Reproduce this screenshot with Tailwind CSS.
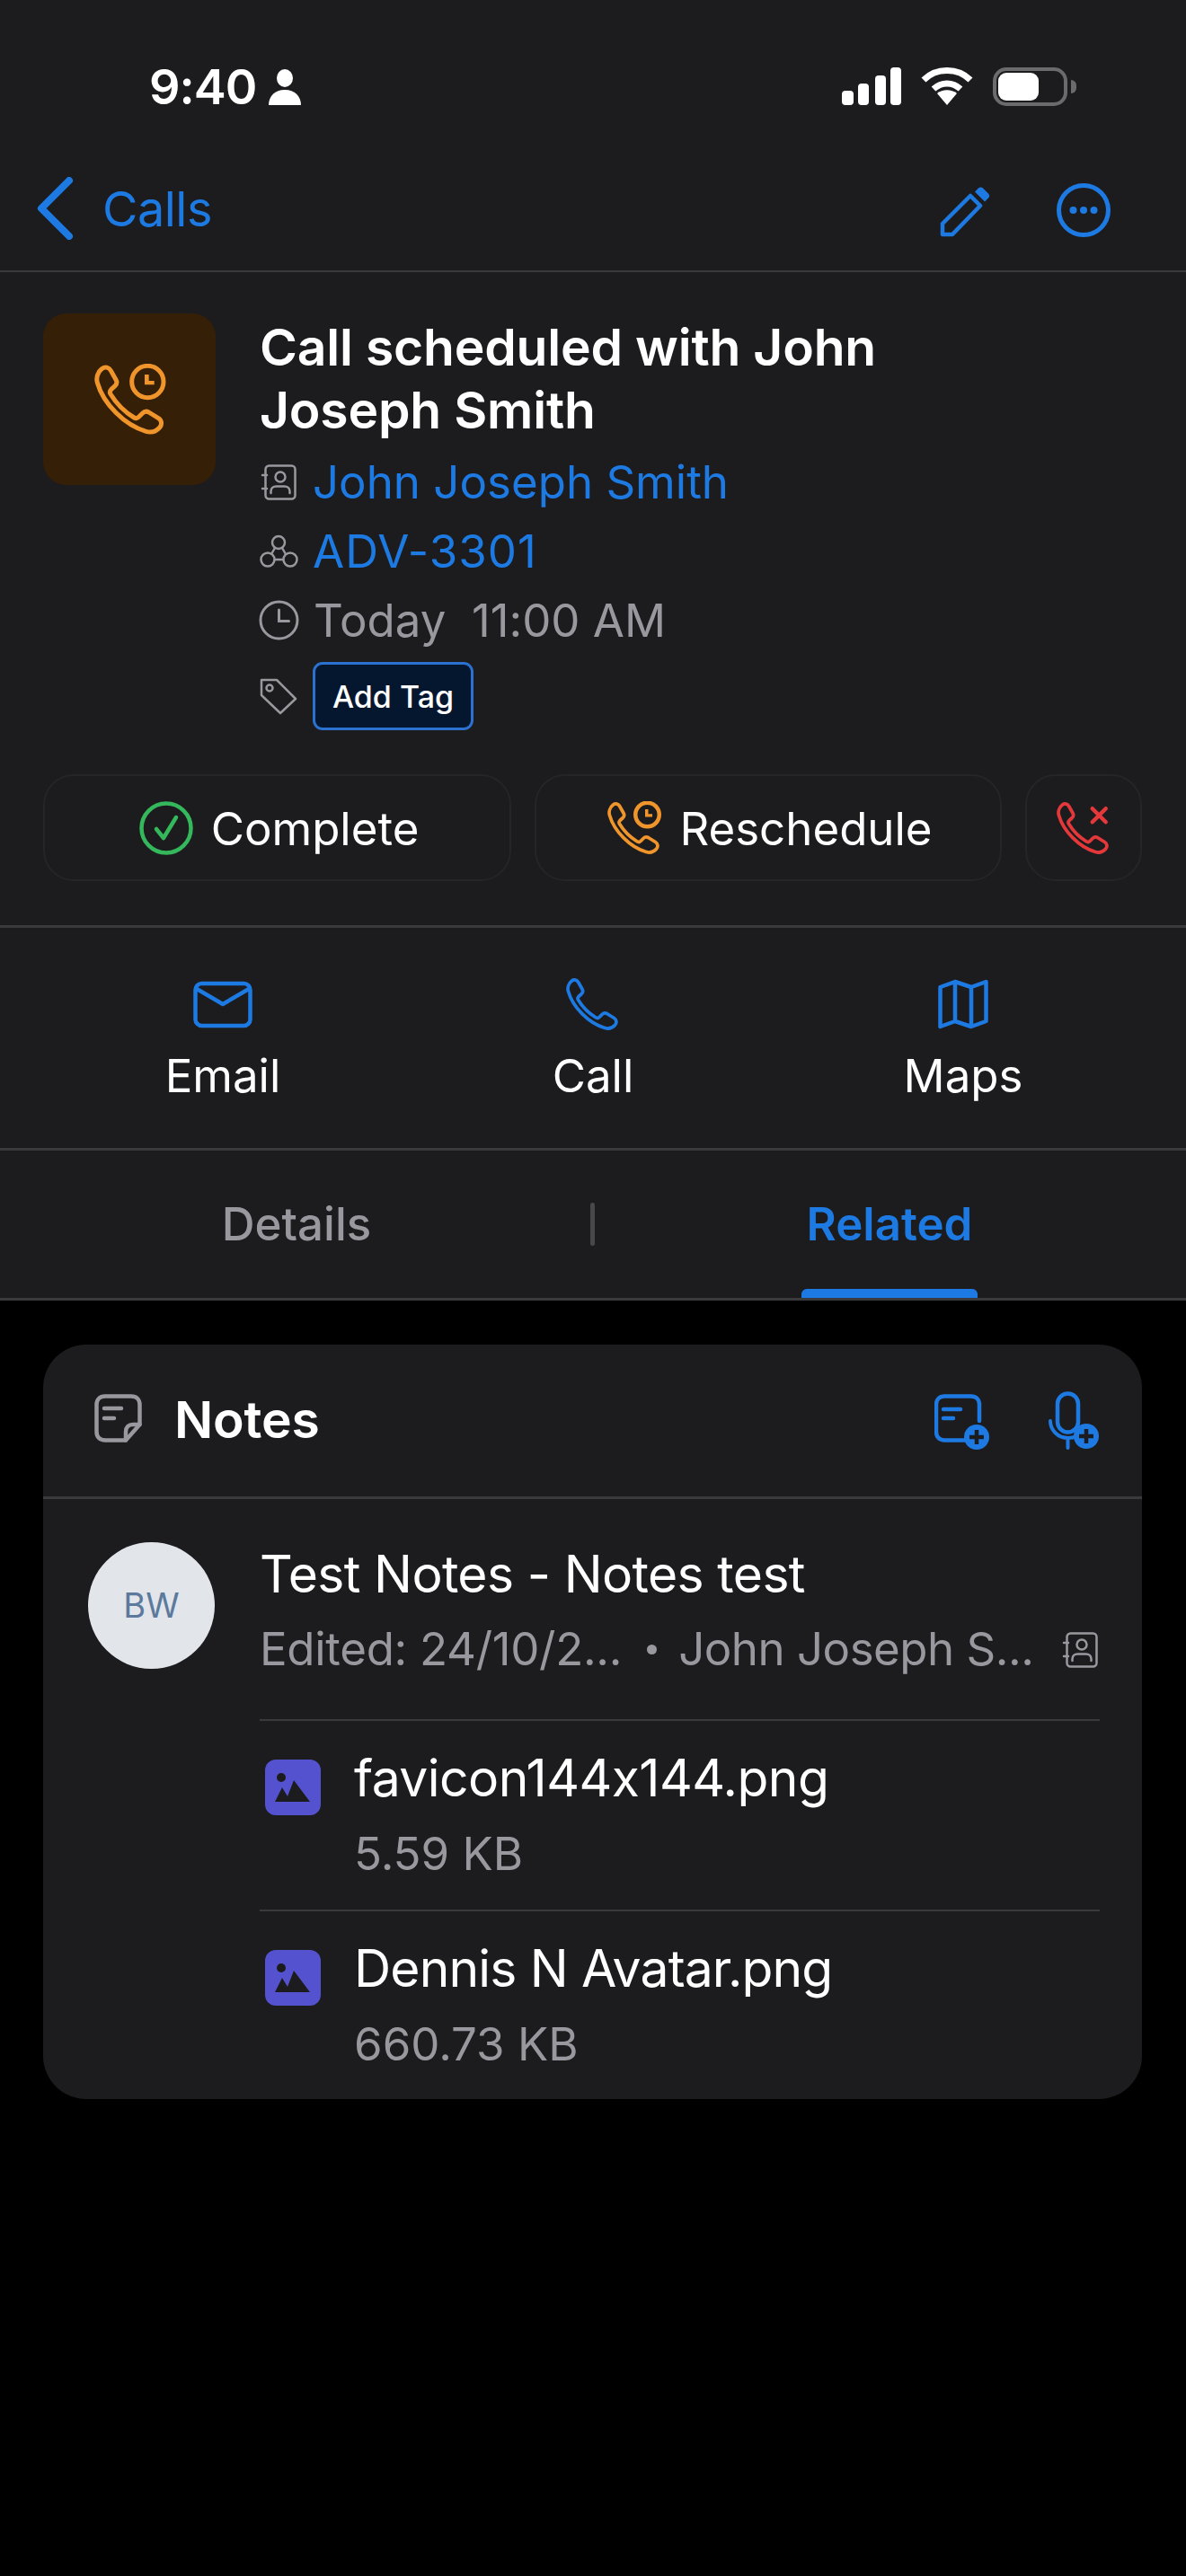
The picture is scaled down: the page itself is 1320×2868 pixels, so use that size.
<!DOCTYPE html>
<html lang="en">
<head>
    <meta charset="UTF-8">
    <meta name="viewport" content="width=device-width, initial-scale=1.0">
    <title>Call details</title>
    <script src="https://cdn.jsdelivr.net/npm/@tailwindcss/browser@4"></script>
</head>
<body class="bg-black min-h-screen font-['Inter',sans-serif] [font-feature-settings:'calt'_0] text-white">
    <!-- shared icons -->
    <svg class="hidden">
        <symbol id="phone" viewBox="0 0 24 24">
            <path fill="none" stroke="currentColor" stroke-width="1.5" stroke-linejoin="round" d="M2.6 1.6c1-.8 2.3-.4 2.9.7l1.7 3c.4.7.3 1.5-.3 2.1L5.6 8.600c-.4.4-.5 1-.2 1.500 1.900 3.100 4.800 6 7.900 7.900.5.3 1.100.2 1.500-.2l1.300-1.300c.6-.6 1.400-.7 2.100-.3l3.200 2c1.100.7 1.300 2.100.4 3.100-1.100 1.200-2.800 1.800-4.500 1.300C10.200 20.600 3 13.400 1 6.300.5 4.600 1.200 2.700 2.600 1.600z"/>
        </symbol>
        <symbol id="contact" viewBox="0 0 40 40">
            <g fill="none" stroke="currentColor" stroke-width="2.500" stroke-linecap="round" stroke-linejoin="round">
                <rect x="5" y="1.500" width="33" height="37" rx="4"/>
                <path d="M1.500 12h5M1.500 27h5"/>
                <circle cx="21.500" cy="14" r="5.500"/>
                <path d="M11 32v-2c0-3.500 2.500-5.500 6-5.500h9c3.500 0 6 2 6 5.500v2"/>
            </g>
        </symbol>
        <symbol id="image" viewBox="0 0 62 62">
            <rect width="62" height="62" rx="12" fill="#5552d0"/>
            <circle cx="18" cy="20" r="5" fill="#1c1c1e"/>
            <path fill="#1c1c1e" d="M11 47l8-16 6 10 7-18 18 24z"/>
        </symbol>
    </svg>

    <div class="bg-[#1c1c1e]">
        <!-- status bar -->
        <div class="h-[190px] pt-[75px] pl-[166px] pr-[122px] flex justify-between items-start">
            <div class="flex items-center gap-[14px] h-[43px]">
                <span class="text-[54px] font-semibold leading-[43px] tracking-[-1px]">9:40</span>
                <svg class="w-[36px] h-[40px]" viewBox="0 0 36 40" fill="#fff"><ellipse cx="18" cy="10" rx="9" ry="10"/><path d="M0 40c0-10 7-17 18-17s18 7 18 17z"/></svg>
            </div>
            <div class="flex items-start gap-[22px]">
                <svg class="w-[66px] h-[42px]" viewBox="0 0 66 42" fill="#fff">
                    <rect x="0" y="26" width="13" height="16" rx="4"/><rect x="18" y="18" width="12" height="24" rx="4"/><rect x="37" y="9" width="12" height="33" rx="4"/><rect x="54" y="0" width="12" height="42" rx="4"/>
                </svg>
                <svg class="w-[58px] h-[42px]" viewBox="0 0 58 42" fill="none" stroke="#fff" stroke-width="7">
                    <path d="M3 14C17 0 41 0 55 14"/><path d="M14 24c9-8 21-8 30 0"/><path fill="#fff" stroke="none" d="M29 42L18 29c6-5 16-5 22 0z"/>
                </svg>
                <div class="flex items-center gap-[4px]">
                    <div class="w-[83px] h-[43px] rounded-[15px] border-[4px] border-[#6b6b6d] p-[2px]">
                        <div class="w-[45px] h-full rounded-[9px] bg-white"></div>
                    </div>
                    <div class="w-[6px] h-[15px] rounded-r-full bg-[#6b6b6d]"></div>
                </div>
            </div>
        </div>

        <!-- nav -->
        <div class="h-[113px] pl-[40px] pr-[84px] flex items-start justify-between border-b-[2px] border-[#3a3a3c] text-[#1e7ae3]">
            <div class="flex items-start gap-[32px]">
                <svg class="w-[42px] h-[70px] mt-[7px]" viewBox="0 0 42 70" fill="none" stroke="currentColor" stroke-width="8" stroke-linecap="round" stroke-linejoin="round"><path d="M37 4L6 35l31 31"/></svg>
                <span class="text-[54px] leading-[70px] mt-[8px] tracking-[-0.5px]">Calls</span>
            </div>
            <div class="flex items-start gap-[74px] pt-[14px]">
                <svg class="w-[56px] h-[56px] mt-[4px]" viewBox="0 0 56 56"><path fill="none" stroke="currentColor" stroke-width="4.500" stroke-linejoin="round" d="M3 53V41L34 10l11 11-31 32z"/><path fill="currentColor" d="M39 5.500l4-4c1.500-1.500 3.500-1.500 5 0l6 6c1.500 1.500 1.500 3.500 0 5l-4 4z"/></svg>
                <svg class="w-[60px] h-[60px]" viewBox="0 0 60 60"><circle cx="30" cy="30" r="27.500" fill="none" stroke="currentColor" stroke-width="5"/><circle cx="18.500" cy="30" r="4" fill="currentColor"/><circle cx="30" cy="30" r="4" fill="currentColor"/><circle cx="41.500" cy="30" r="4" fill="currentColor"/></svg>
            </div>
        </div>

        <!-- call summary -->
        <div class="pt-[46px] px-[48px] pb-[49px] border-b-[3px] border-[#3a3a3c]">
            <div class="flex gap-[49px]">
                <div class="w-[192px] h-[191px] shrink-0 rounded-[26px] bg-[#361f07] flex items-center justify-center text-[#f0952b]">
                    <svg class="w-[80px] h-[80px] ml-[2px]" viewBox="0 0 24 24">
                        <use href="#phone"/>
                        <circle cx="17.800" cy="6" r="5.300" fill="#361f07" stroke="currentColor" stroke-width="1.500"/>
                        <path fill="currentColor" d="M16.800 3.600h1.400v2.100h1.800V7h-3.200z"/>
                    </svg>
                </div>
                <div class="pt-[3px] min-w-0">
                    <h1 class="text-[57px] leading-[70px] font-semibold tracking-[-0.2px] w-[800px]">Call scheduled with John Joseph Smith</h1>
                    <div class="mt-[6px] flex items-center h-[77px] gap-[16px] text-[#98989e]">
                        <svg class="w-[43px] h-[40px] shrink-0"><use href="#contact"/></svg>
                        <span class="text-[51px] leading-[77px] text-[#1e7ae3]">John Joseph Smith</span>
                    </div>
                    <div class="flex items-center h-[77px] gap-[16px] text-[#98989e]">
                        <svg class="w-[43px] h-[38px] shrink-0" viewBox="0 0 43 38" fill="none" stroke="currentColor" stroke-width="2.500"><circle cx="21" cy="9" r="7"/><circle cx="9" cy="28" r="7.500"/><circle cx="34" cy="28" r="7.500"/><path d="M17 15l-4 7M25 15l4 7M16.500 28h10"/></svg>
                        <span class="text-[51px] leading-[77px] tracking-[1px] text-[#1e7ae3]">ADV-3301</span>
                    </div>
                    <div class="flex items-center h-[77px] gap-[16px] text-[#98989e]">
                        <svg class="w-[45px] h-[45px] -ml-[1px] shrink-0" viewBox="0 0 45 45" fill="none" stroke="currentColor" stroke-width="3" stroke-linecap="round"><circle cx="22.500" cy="22.500" r="20.500"/><path d="M22.500 11v12.500h11"/></svg>
                        <span class="text-[51px] leading-[77px] whitespace-pre">Today  11:00 AM</span>
                    </div>
                    <div class="mt-[8px] flex items-center gap-[16px] text-[#98989e]">
                        <svg class="w-[43px] h-[42px] shrink-0" viewBox="0 0 43 42" fill="none" stroke="currentColor" stroke-width="2.500" stroke-linejoin="round"><path d="M2 3h17l21 21-17 16L2 20z"/><circle cx="11" cy="12" r="3.500"/></svg>
                        <button class="w-[179px] h-[76px] rounded-[11px] border-[3px] border-[#2b72d0] bg-[#04172f] text-white text-[34px] font-medium">Add Tag</button>
                    </div>
                </div>
            </div>
            <div class="mt-[49px] flex gap-[26px] text-[51px]">
                <button class="w-[521px] h-[119px] pl-[4px] rounded-[34px] border-[2px] border-[#252527] flex items-center justify-center gap-[20px]">
                    <svg class="w-[60px] h-[60px]" viewBox="0 0 60 60" fill="none" stroke="#34b85b" stroke-width="4.500" stroke-linecap="round" stroke-linejoin="round"><circle cx="30" cy="30" r="27.500"/><path d="M19 31l8 10 14-23"/></svg>
                    <span class="pt-[3px]">Complete</span>
                </button>
                <button class="w-[520px] h-[119px] pl-[4px] rounded-[34px] border-[2px] border-[#252527] flex items-center justify-center gap-[20px]">
                    <svg class="w-[60px] h-[60px] text-[#f0952b]" viewBox="0 0 24 24">
                        <use href="#phone"/>
                        <circle cx="17.800" cy="6" r="5.300" fill="#1c1c1e" stroke="currentColor" stroke-width="1.800"/>
                        <path fill="currentColor" d="M16.800 3.600h1.400v2.100h1.800V7h-3.200z"/>
                    </svg>
                    <span class="pt-[3px]">Reschedule</span>
                </button>
                <button class="w-[130px] h-[119px] rounded-[34px] border-[2px] border-[#252527] flex items-center justify-center">
                    <svg class="w-[60px] h-[60px] text-[#e5383b]" viewBox="0 0 24 24">
                        <use href="#phone"/>
                        <path fill="none" stroke="currentColor" stroke-width="1.800" stroke-linecap="round" d="M15.900 3.300l6 6M21.900 3.300l-6 6"/>
                    </svg>
                </button>
            </div>
        </div>

        <!-- quick actions -->
        <div class="h-[248px] px-[42px] grid grid-cols-3 border-b-[3px] border-[#3a3a3c] text-[51px]">
            <div class="flex flex-col items-center pt-[55px]">
                <svg class="w-[66px] h-[60px] text-[#1e7ae3]" viewBox="0 0 66 60" fill="none" stroke="currentColor" stroke-width="4.500" stroke-linejoin="round"><rect x="2.500" y="7" width="61" height="47" rx="7"/><path d="M4 13l29 17 29-17"/></svg>
                <span class="mt-[20px] leading-[60px]">Email</span>
            </div>
            <div class="flex flex-col items-center pt-[55px]">
                <svg class="w-[60px] h-[60px] text-[#1e7ae3]" viewBox="0 0 24 24"><use href="#phone"/></svg>
                <span class="mt-[20px] leading-[60px]">Call</span>
            </div>
            <div class="flex flex-col items-center pt-[55px]">
                <svg class="w-[56px] h-[60px] text-[#1e7ae3]" viewBox="0 0 56 60" fill="none" stroke="currentColor" stroke-width="4.500" stroke-linejoin="round"><path d="M2.500 11L19 5l18 6 16.500-6v44L37 55l-18-6-16.500 6zM19 5v44M37 11v44"/></svg>
                <span class="mt-[20px] leading-[60px]">Maps</span>
            </div>
        </div>

        <!-- tabs -->
        <div class="h-[167px] grid grid-cols-2 border-b-[3px] border-[#3a3a3c] text-[51px] leading-[60px]">
            <div class="relative flex items-center justify-center text-[#98989e] font-medium">
                Details
                <span class="absolute right-[-2px] top-[58px] w-[5px] h-[48px] rounded bg-[#48484a]"></span>
            </div>
            <div class="relative flex items-center justify-center text-[#1e7ae3] font-semibold">
                Related
                <span class="absolute left-[232px] bottom-0 w-[196px] h-[10px] rounded-t-[6px] bg-[#1e7ae3]"></span>
            </div>
        </div>
    </div>

    <!-- notes card -->
    <div class="mt-[49px] ml-[48px] w-[1223px] h-[840px] rounded-[48px] bg-[#1c1c1e] overflow-hidden">
        <div class="h-[172px] border-b-[3px] border-[#3a3a3c] pl-[57px] pr-[48px] flex items-start justify-between">
            <div class="flex items-center gap-[36px] pt-[46px]">
                <svg class="w-[53px] h-[54px] mt-[-2px] text-[#98989e]" viewBox="0 0 53 54" fill="none" stroke="currentColor" stroke-width="4.500" stroke-linecap="round" stroke-linejoin="round"><path d="M35 51.500H12C6 51.500 2.500 48 2.500 42V12C2.500 6 6 2.500 12 2.500h29c6 0 9.500 3.500 9.500 9.500v22z"/><path d="M35 51.500V42c0-5 3-8 8-8h7.500"/><path d="M11 16h19M11 27h11"/></svg>
                <span class="text-[57px] font-semibold leading-[70px] tracking-[-0.2px] pt-[3px]">Notes</span>
            </div>
            <div class="flex items-start gap-[66px] pt-[55px] text-[#1e7ae3]">
                <svg class="w-[61px] h-[62px]" viewBox="0 0 61 62">
                    <path fill="none" stroke="currentColor" stroke-width="4.500" stroke-linecap="round" d="M50 30V12c0-6-3.500-9.500-9.500-9.500h-29C5.500 2.500 2 6 2 12v30c0 6 3.500 9.500 9.500 9.500H34M10 17h19M10 27h11"/>
                    <circle cx="47" cy="48" r="14" fill="currentColor"/>
                    <path stroke="#1c1c1e" stroke-width="4.500" d="M47 40v16M39 48h16"/>
                </svg>
                <svg class="w-[56px] h-[65px] -mt-[3px]" viewBox="0 0 56 65">
                    <rect x="10" y="2.500" width="23" height="43" rx="11.500" fill="none" stroke="currentColor" stroke-width="4.500"/>
                    <path fill="none" stroke="currentColor" stroke-width="4" stroke-linecap="round" d="M2 33c0 10 8 19 20 19 6 0 12-3 16-8M21.500 52v11"/>
                    <circle cx="42" cy="50" r="14" fill="currentColor"/>
                    <path stroke="#1c1c1e" stroke-width="4.500" d="M42 42v16M34 50h16"/>
                </svg>
            </div>
        </div>
        <div class="flex pl-[50px] pr-[47px]">
            <div class="w-[141px] h-[141px] mt-[48px] shrink-0 rounded-full bg-[#e2e5e9] flex items-center justify-center text-[#5b7a9d] text-[38px]">BW</div>
            <div class="ml-[50px] flex-1 min-w-0">
                <div class="pt-[49px] pb-[39px] border-b-[2px] border-[#3a3a3c]">
                    <div class="text-[57px] leading-[70px] tracking-[-0.65px]">Test Notes - Notes test</div>
                    <div class="mt-[10px] h-[77px] flex items-center text-[51px] tracking-[-0.3px] text-[#98989e] whitespace-nowrap">
                        <span>Edited: 24/10/2...</span>
                        <span class="ml-[28px] w-[11px] h-[11px] shrink-0 rounded-full bg-[#98989e]"></span>
                        <span class="ml-[24px] tracking-[-0.5px]">John Joseph S...</span>
                        <svg class="ml-[32px] w-[41px] h-[40px] shrink-0"><use href="#contact"/></svg>
                    </div>
                </div>
                <div class="flex pt-[29px] pb-[24px] border-b-[2px] border-[#3a3a3c]">
                    <svg class="w-[62px] h-[62px] ml-[6px] mt-[14px] shrink-0"><use href="#image"/></svg>
                    <div class="ml-[37px]">
                        <div class="text-[57px] leading-[70px] tracking-[-0.55px]">favicon144x144.png</div>
                        <div class="mt-[10px] text-[51px] leading-[77px] text-[#98989e]">5.59 KB</div>
                    </div>
                </div>
                <div class="flex pt-[29px]">
                    <svg class="w-[62px] h-[62px] ml-[6px] mt-[14px] shrink-0"><use href="#image"/></svg>
                    <div class="ml-[37px]">
                        <div class="text-[57px] leading-[70px] tracking-[-0.85px]">Dennis N Avatar.png</div>
                        <div class="mt-[10px] text-[51px] leading-[77px] text-[#98989e]">660.73 KB</div>
                    </div>
                </div>
            </div>
        </div>
    </div>
</body>
</html>
